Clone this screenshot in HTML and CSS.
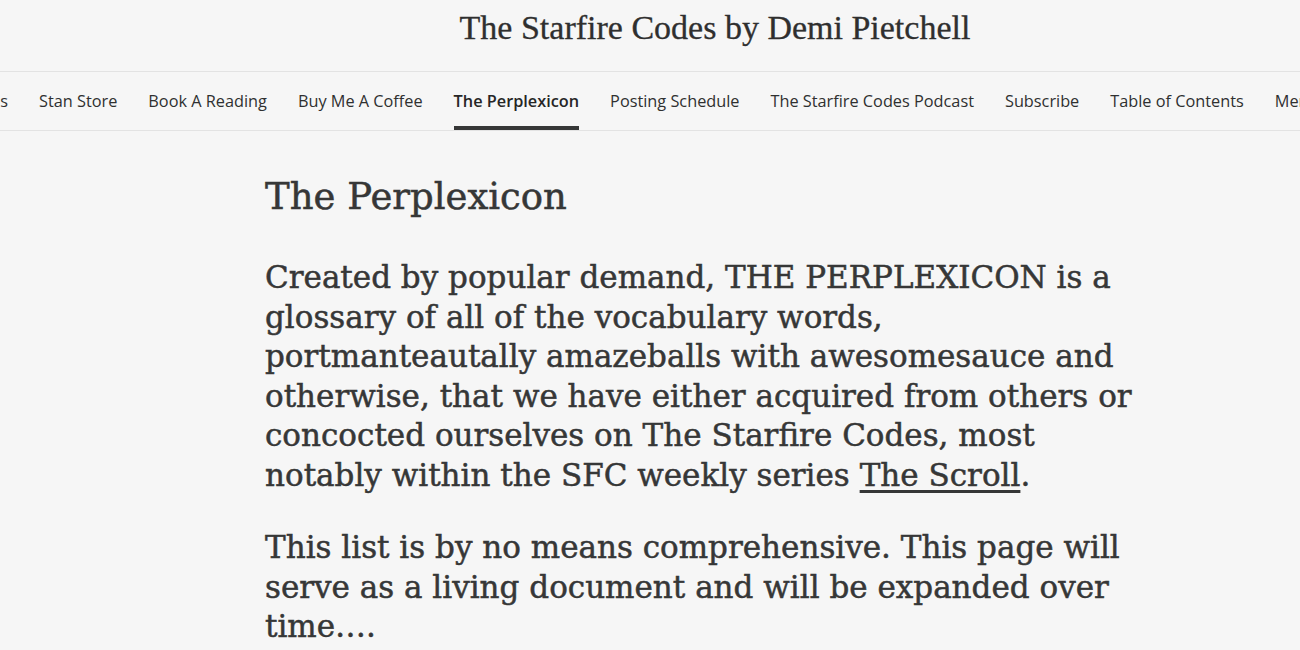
FILE: index.html
```html
<!DOCTYPE html>
<html lang="en">
<head>
<meta charset="utf-8">
<title>The Perplexicon - The Starfire Codes by Demi Pietchell</title>
<link rel="stylesheet" href="styles.css">
</head>
<body>
<header class="site-header">
  <h1 class="site-title">The Starfire Codes by Demi Pietchell</h1>
</header>
<nav class="site-nav">
  <div class="nav-track">
    <div class="nav-clip"><a class="nav-item" href="#">Archives</a></div>
    <a class="nav-item" href="#">Stan Store</a>
    <a class="nav-item" href="#">Book A Reading</a>
    <a class="nav-item" href="#">Buy Me A Coffee</a>
    <a class="nav-item active" href="#">The Perplexicon</a>
    <a class="nav-item" href="#">Posting Schedule</a>
    <a class="nav-item" href="#">The Starfire Codes Podcast</a>
    <a class="nav-item" href="#">Subscribe</a>
    <a class="nav-item" href="#">Table of Contents</a>
    <a class="nav-item" href="#">Mentorship</a>
  </div>
</nav>
<main class="page">
  <h2 class="page-title">The Perplexicon</h2>
  <p class="body-text">Created by popular demand, THE PERPLEXICON is a<br>
  glossary of all of the vocabulary words,<br>
  portmanteautally amazeballs with awesomesauce and<br>
  otherwise, that we have either acquired from others or<br>
  concocted ourselves on The Starfire Codes, most<br>
  notably within the SFC weekly series <a class="link" href="#">The Scroll</a>.</p>
  <p class="body-text">This list is by no means comprehensive. This page will<br>
  serve as a living document and will be expanded over<br>
  time….</p>
</main>
</body>
</html>
```
FILE: styles.css
```css
html, body {
  margin: 0;
  padding: 0;
}
body {
  background: #f6f6f6;
  color: #363737;
  overflow: hidden;
  width: 1300px;
  height: 650px;
}
.site-header {
  display: flex;
  justify-content: center;
  padding: 8px 0 23px 130px;
  border-bottom: 1px solid #e3e3e3;
}
.site-title {
  margin: 0;
  font-family: "Liberation Serif", serif;
  font-weight: normal;
  font-size: 34px;
  line-height: 40px;
  color: #2f2f2f;
  -webkit-text-stroke: 0.3px #2f2f2f;
}
.site-nav {
  border-bottom: 1px solid #e3e3e3;
  overflow: hidden;
}
.nav-track {
  display: flex;
  gap: 31px;
  height: 58px;
}
.nav-clip {
  width: 8px;
  overflow: hidden;
  display: flex;
  justify-content: flex-end;
  flex-shrink: 0;
}
.nav-item {
  flex-shrink: 0;
  display: flex;
  align-items: center;
  font-family: "Open Sans", sans-serif;
  font-size: 16.3px;
  color: #2f3030;
  text-decoration: none;
  white-space: nowrap;
  border-bottom: 4px solid transparent;
  padding-top: 4px;
}
.nav-item.active {
  font-weight: 600;
  color: #262626;
  border-bottom-color: #363737;
}
.page {
  padding-left: 265px;
  padding-top: 44px;
}
.page-title {
  margin: 0 0 39px;
  font-family: "DejaVu Serif", serif;
  font-weight: normal;
  font-size: 37px;
  line-height: 44px;
  -webkit-text-stroke: 0.5px #363737;
}
.body-text {
  margin: 0 0 33px;
  font-family: "DejaVu Serif", serif;
  font-size: 31px;
  line-height: 39.5px;
  white-space: nowrap;
  -webkit-text-stroke: 0.5px #363737;
}
.link {
  color: inherit;
  text-decoration: underline;
  text-underline-offset: 4px;
  text-decoration-thickness: 3px;
}
```
